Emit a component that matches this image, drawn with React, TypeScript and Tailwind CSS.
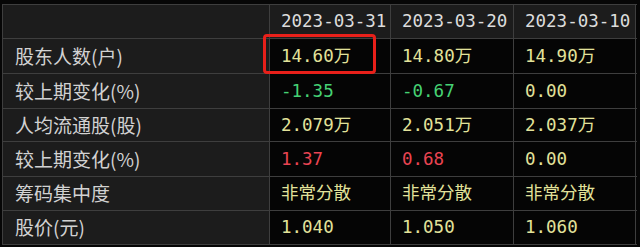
const rows: { label: string; h: string; values: { text: string; color: string }[] }[] = [
  {
    label: "股东人数(户)",
    h: "h-[35px]",
    values: [
      { text: "14.60万", color: "text-[#e2e29a]" },
      { text: "14.80万", color: "text-[#e2e29a]" },
      { text: "14.90万", color: "text-[#e2e29a]" },
    ],
  },
  {
    label: "较上期变化(%)",
    h: "h-[35px]",
    values: [
      { text: "-1.35", color: "text-[#45d274]" },
      { text: "-0.67", color: "text-[#45d274]" },
      { text: "0.00", color: "text-[#e2e29a]" },
    ],
  },
  {
    label: "人均流通股(股)",
    h: "h-[33px]",
    values: [
      { text: "2.079万", color: "text-[#e2e29a]" },
      { text: "2.051万", color: "text-[#e2e29a]" },
      { text: "2.037万", color: "text-[#e2e29a]" },
    ],
  },
  {
    label: "较上期变化(%)",
    h: "h-[35px]",
    values: [
      { text: "1.37", color: "text-[#ea4452]" },
      { text: "0.68", color: "text-[#ea4452]" },
      { text: "0.00", color: "text-[#e2e29a]" },
    ],
  },
  {
    label: "筹码集中度",
    h: "h-[34px]",
    values: [
      { text: "非常分散", color: "text-[#e2e29a]" },
      { text: "非常分散", color: "text-[#e2e29a]" },
      { text: "非常分散", color: "text-[#e2e29a]" },
    ],
  },
  {
    label: "股价(元)",
    h: "h-[34px]",
    values: [
      { text: "1.040", color: "text-[#e2e29a]" },
      { text: "1.050", color: "text-[#e2e29a]" },
      { text: "1.060", color: "text-[#e2e29a]" },
    ],
  },
]

const dates = ["2023-03-31", "2023-03-20", "2023-03-10"]
const colW = ["w-[121px]", "w-[123px]", "w-[122px]"]

const labelFont = { fontFamily: '"Noto Sans CJK SC", "Noto Sans", sans-serif' }
const numFont = { fontFamily: '"DejaVu Sans Mono", "Noto Sans CJK SC", monospace' }

export default function App() {
  return (
    <div className="relative h-[247px] w-[640px] overflow-hidden bg-[#060606] pl-[2px] pt-[4px]">
      <div className="w-[635px] border-l border-t border-[#3e3e3e]">
        <div className="flex h-[34px] border-b border-[#3e3e3e]">
          <div className="w-[267px] border-r border-[#3e3e3e] bg-[#1c1c1c]" />
          {dates.map((d, i) => (
            <div
              key={d}
              className={`${colW[i]} flex items-center border-r border-[#3e3e3e] bg-[#1c1c1c] pl-[11px] text-[17.5px] text-[#dcdcdc]`}
              style={numFont}>
              {d}
            </div>
          ))}
        </div>
        {rows.map((r, ri) => (
          <div key={ri} className={`flex ${r.h} border-b border-[#3e3e3e]`}>
            <div
              className="flex w-[267px] items-center border-r border-[#3e3e3e] bg-[#1c1c1c] pl-[12px] text-[19px] text-[#d2d2d2]"
              style={labelFont}>
              {r.label}
            </div>
            {r.values.map((v, i) => (
              <div
                key={i}
                className={`${colW[i]} flex items-center border-r border-[#3e3e3e] bg-[#050505] pl-[11px] text-[17.5px] ${v.color}`}
                style={numFont}>
                {v.text}
              </div>
            ))}
          </div>
        ))}
      </div>
      <div className="absolute left-[263px] top-[34px] h-[40px] w-[113px] rounded-[4px] border-[3px] border-[#e8201a]" />
    </div>
  )
}
